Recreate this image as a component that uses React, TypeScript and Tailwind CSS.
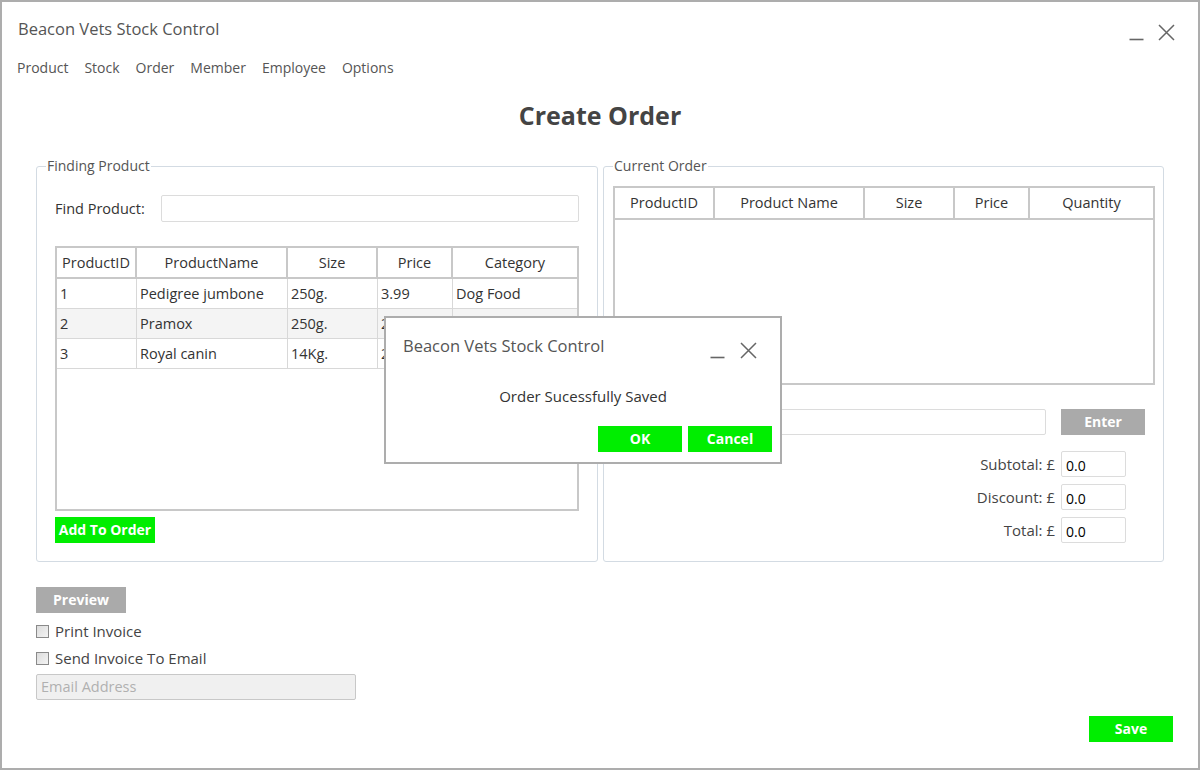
import React from 'react'

const FONT = { fontFamily: '"Open Sans", "Noto Sans", sans-serif' }

const PRODUCTS = [
  { id: '1', name: 'Pedigree jumbone', size: '250g.', price: '3.99', category: 'Dog Food' },
  { id: '2', name: 'Pramox', size: '250g.', price: '2.50', category: 'Medicine' },
  { id: '3', name: 'Royal canin', size: '14Kg.', price: '24.99', category: 'Dog Food' },
]

const LEFT_COLS = [
  { label: 'ProductID', w: 'w-[80px]' },
  { label: 'ProductName', w: 'w-[151px]' },
  { label: 'Size', w: 'w-[90px]' },
  { label: 'Price', w: 'w-[75px]' },
  { label: 'Category', w: 'flex-1' },
]

const RIGHT_COLS = [
  { label: 'ProductID', w: 'w-[100px]' },
  { label: 'Product Name', w: 'w-[150px]' },
  { label: 'Size', w: 'w-[90px]' },
  { label: 'Price', w: 'w-[75px]' },
  { label: 'Quantity', w: 'flex-1' },
]

function WinControls({ small = false }: { small?: boolean }) {
  return (
    <div className={`flex items-end ${small ? 'gap-[15px]' : 'gap-[14px]'}`}>
      <svg width="15" height="16" viewBox="0 0 15 16">
        <line x1="0.5" y1="14.5" x2="14.5" y2="14.5" stroke="#666" strokeWidth="1.6" />
      </svg>
      <svg width="17" height="17" viewBox="0 0 17 17">
        <path d="M1 1 L16 16 M16 1 L1 16" stroke="#666" strokeWidth="1.5" fill="none" />
      </svg>
    </div>
  )
}

function GreenBtn({ children, className = '' }: { children: React.ReactNode; className?: string }) {
  return (
    <button className={`h-[26px] bg-[#00ee00] text-white font-bold text-[14px] leading-none ${className}`}>
      {children}
    </button>
  )
}

function GrayBtn({ children, className = '' }: { children: React.ReactNode; className?: string }) {
  return (
    <button className={`h-[26px] bg-[#aaaaaa] text-white font-bold text-[14px] leading-none ${className}`}>
      {children}
    </button>
  )
}

function Checkbox({ label }: { label: string }) {
  return (
    <label className="flex items-center gap-[6px] h-[18px]">
      <span className="w-[13px] h-[13px] border border-[#8a8a8a] bg-gradient-to-br from-[#dcdcdc] to-[#f4f4f4]" />
      <span className="text-[15px] text-[#444]">{label}</span>
    </label>
  )
}

export default function App() {
  return (
    <div style={FONT} className="relative w-[1200px] h-[770px] border-2 border-[#adadad] bg-white overflow-hidden flex flex-col">
      {/* Title bar */}
      <div className="flex justify-between pl-4 pr-[23px] pt-[15px]">
        <div className="text-[16.5px] leading-[24px] text-[#555]">Beacon Vets Stock Control</div>
        <div className="mt-[7px]"><WinControls /></div>
      </div>

      {/* Menu */}
      <nav className="flex gap-[16px] pl-[15px] mt-[17px] text-[14px] leading-[20px] text-[#555]">
        {['Product', 'Stock', 'Order', 'Member', 'Employee', 'Options'].map(m => (
          <span key={m}>{m}</span>
        ))}
      </nav>

      <h1 className="text-center text-[25px] font-bold leading-[34px] text-[#444] mt-[20px]">Create Order</h1>

      {/* Group boxes */}
      <div className="flex gap-[5px] ml-[34px] mt-[25px]">
        <fieldset className="w-[562px] border border-[#d3dbe3] rounded-[3px] px-[18px] pb-[18px]">
          <legend className="ml-[-9px] px-px text-[14px] leading-[18px] text-[#555]">Finding Product</legend>
          <div className="flex items-center mt-[20px]">
            <span className="w-[106px] text-[14.5px] text-[#333]">Find Product:</span>
            <div className="flex-1 h-[27px] border border-[#dcdcdc] rounded-[2px]" />
          </div>

          <div className="mt-[24px] h-[265px] border-2 border-[#c8c8c8] text-[14.5px] text-[#333]">
            <div className="flex h-[31px] border-b-2 border-[#c8c8c8]">
              {LEFT_COLS.map((c, i) => (
                <div key={c.label} className={`${c.w} flex items-center justify-center ${i < LEFT_COLS.length - 1 ? 'border-r-2 border-[#c8c8c8]' : ''}`}>
                  {c.label}
                </div>
              ))}
            </div>
            {PRODUCTS.map((p, ri) => (
              <div key={p.id} className={`flex h-[30px] border-b border-[#d8d8d8] ${ri === 1 ? 'bg-[#f4f4f4]' : ''}`}>
                {[p.id, p.name, p.size, p.price, p.category].map((v, i) => (
                  <div key={i} className={`${LEFT_COLS[i].w} flex items-center pl-[3px] ${i < 4 ? 'border-r border-[#d8d8d8]' : ''}`}>
                    {v}
                  </div>
                ))}
              </div>
            ))}
          </div>

          <GreenBtn className="mt-[6px] w-[100px]">Add To Order</GreenBtn>
        </fieldset>

        <fieldset className="w-[561px] border border-[#d3dbe3] rounded-[3px] pl-[9px] pr-[8px] pb-[18px]">
          <legend className="ml-[0px] px-px text-[14px] leading-[18px] text-[#555]">Current Order</legend>
          <div className="mt-[11px] h-[199px] border-2 border-[#c8c8c8] text-[14.5px] text-[#333]">
            <div className="flex h-[32px] border-b-2 border-[#c8c8c8]">
              {RIGHT_COLS.map((c, i) => (
                <div key={c.label} className={`${c.w} flex items-center justify-center ${i < RIGHT_COLS.length - 1 ? 'border-r-2 border-[#c8c8c8]' : ''}`}>
                  {c.label}
                </div>
              ))}
            </div>
          </div>

          <div className="flex items-center gap-[15px] mt-[24px] pr-[10px]">
            <div className="flex-1 h-[26px] border border-[#dcdcdc] rounded-[2px]" />
            <GrayBtn className="w-[84px]">Enter</GrayBtn>
          </div>

          <div className="flex flex-col items-end gap-[7px] mt-[16px] pr-[29px]">
            {['Subtotal: £', 'Discount: £', 'Total: £'].map(l => (
              <div key={l} className="flex items-center gap-[6px]">
                <span className="text-[15px] text-[#444]">{l}</span>
                <div className="w-[65px] h-[26px] border border-[#dcdcdc] rounded-[2px] flex items-center pl-[4px] pt-[3px] text-[14px] text-black">0.0</div>
              </div>
            ))}
          </div>
        </fieldset>
      </div>

      {/* Invoice options */}
      <div className="flex flex-col items-start ml-[34px] mt-[25px]">
        <GrayBtn className="w-[90px]">Preview</GrayBtn>
        <div className="mt-[9px] flex flex-col gap-[9px]">
          <Checkbox label="Print Invoice" />
          <Checkbox label="Send Invoice To Email" />
        </div>
        <div className="mt-[7px] w-[320px] h-[26px] bg-[#f0f0f0] border border-[#c8c8c8] rounded-[2px] flex items-center pl-[4px] text-[14.5px] text-[#b0b0b0]">
          Email Address
        </div>
      </div>

      <div className="flex justify-end mr-[25px] mt-[16px]">
        <GreenBtn className="w-[84px]">Save</GreenBtn>
      </div>

      {/* Message dialog */}
      <div className="absolute left-[382px] top-[314px] w-[398px] h-[148px] bg-white border-2 border-[#adadad] flex flex-col">
        <div className="flex justify-between pl-[17px] pr-[23px] pt-[17px]">
          <span className="text-[16.5px] leading-[22px] text-[#555]">Beacon Vets Stock Control</span>
          <div className="mt-[7px]"><WinControls small /></div>
        </div>
        <div className="text-center text-[15px] text-[#333] mt-[27px] leading-[20px]">Order Sucessfully Saved</div>
        <div className="flex justify-end gap-[6px] pr-[8px] mt-[20px]">
          <GreenBtn className="w-[84px]">OK</GreenBtn>
          <GreenBtn className="w-[84px]">Cancel</GreenBtn>
        </div>
      </div>
    </div>
  )
}
